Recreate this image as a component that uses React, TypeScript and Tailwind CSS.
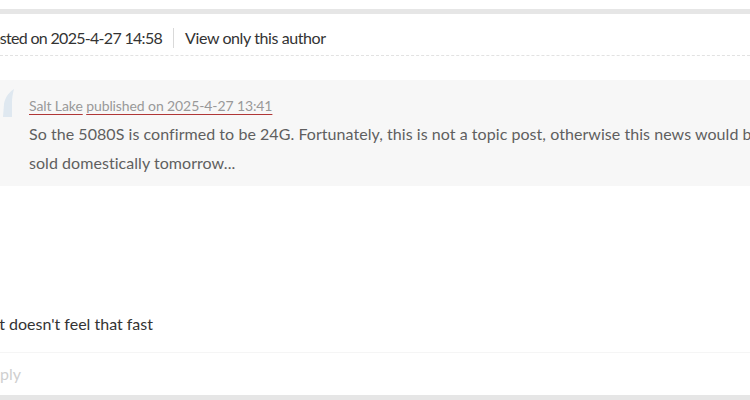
export default function App() {
  return (
    <div className="w-[750px] h-[400px] overflow-hidden bg-white text-[#333] font-['Lato','Open_Sans',sans-serif]">
      <div className="h-[9px]" />
      <div className="h-[5px] bg-[#e6e6e6]" />

      {/* post meta */}
      <div className="flex items-center h-[42px] pt-[7px] border-b border-dashed border-[#e2e2e2] text-[16px] leading-[22px] tracking-[-0.4px] whitespace-nowrap">
        <span className="ml-[-17px] tracking-[-0.7px]">Posted on 2025-4-27 14:58</span>
        <span className="mx-[11px] w-px h-[20px] bg-[#d9d9d9]" />
        <span>View only this author</span>
      </div>

      {/* quoted reply */}
      <div className="mt-[24px] h-[106px] bg-[#f7f7f7] relative pl-[29px] pt-[15px] whitespace-nowrap overflow-hidden">
        <svg className="absolute left-0 top-[8px]" width="16" height="30" viewBox="0 0 16 30">
          <path d="M14 1 C8 5 5 10 4 16 L3 29 L12 29 L12 14 C12 9 13 5 14 1 Z" fill="#dfe8f0" />
        </svg>
        <div className="text-[14px] leading-[22px] tracking-[-0.1px] text-[#999]">
          <span className="underline decoration-[#b03636] underline-offset-[3px]">Salt Lake</span>{" "}
          <span className="underline decoration-[#b03636] underline-offset-[3px]">published on 2025-4-27 13:41</span>
        </div>
        <div className="text-[16px] leading-[29px] tracking-[0.05px] text-[#5f5f5f] mt-[2px]">
          <p>So the 5080S is confirmed to be 24G. Fortunately, this is not a topic post, otherwise this news would be</p>
          <p>sold domestically tomorrow...</p>
        </div>
      </div>

      {/* reply body */}
      <div className="h-[167px] flex items-end pb-[17px] text-[16px] leading-[22px] whitespace-nowrap border-b border-[#f5f5f5]">
        <span className="ml-[-5px]">It doesn't feel that fast</span>
      </div>

      <div className="h-[42px] flex items-center text-[16px] leading-[22px] text-[#cfcfcf]">
        <span className="ml-[-18px]">Reply</span>
      </div>
      <div className="h-[5px] bg-[#e6e6e6]" />
    </div>
  );
}
